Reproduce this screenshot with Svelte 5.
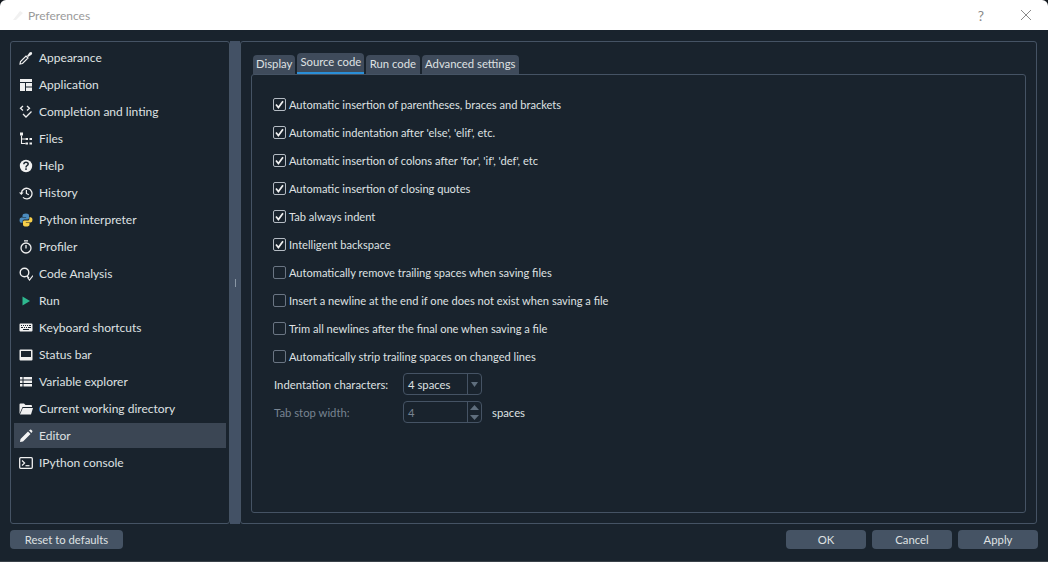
<script>
  const pages = [
    'Appearance', 'Application', 'Completion and linting', 'Files', 'Help', 'History',
    'Python interpreter', 'Profiler', 'Code Analysis', 'Run', 'Keyboard shortcuts',
    'Status bar', 'Variable explorer', 'Current working directory', 'Editor', 'IPython console'
  ];
  const tabs = ['Display', 'Source code', 'Run code', 'Advanced settings'];
  const options = [
    { label: 'Automatic insertion of parentheses, braces and brackets', on: true },
    { label: "Automatic indentation after 'else', 'elif', etc.", on: true },
    { label: "Automatic insertion of colons after 'for', 'if', 'def', etc", on: true },
    { label: 'Automatic insertion of closing quotes', on: true },
    { label: 'Tab always indent', on: true },
    { label: 'Intelligent backspace', on: true },
    { label: 'Automatically remove trailing spaces when saving files', on: false },
    { label: 'Insert a newline at the end if one does not exist when saving a file', on: false },
    { label: 'Trim all newlines after the final one when saving a file', on: false },
    { label: 'Automatically strip trailing spaces on changed lines', on: false }
  ];
</script>

<div class="window">
  <header class="titlebar">
    <svg class="logo" width="14" height="14" viewBox="0 0 14 14"><path d="M2 12 L9 3 L12 5 L5 12 Z" fill="#f1f1f1"/></svg>
    <span class="title">Preferences</span>
    <span class="help">?</span>
    <svg class="close" width="12" height="12" viewBox="0 0 12 12"><path d="M1 1 L11 11 M11 1 L1 11" stroke="#8a8a8a" stroke-width="1" fill="none"/></svg>
  </header>

  <div class="body">
    <div class="panes">
      <ul class="sidebar">
        {#each pages as page}
          <li class="page" class:active={page === 'Editor'}>
            <svg class="icon" width="14" height="14" viewBox="0 0 14 14">
              {#if page === 'Appearance'}
                <path d="M1 13 L1.5 10.5 L7 5 L9 7 L3.5 12.5 Z" fill="none" stroke="#f0f0f0" stroke-width="1.2"/>
                <path d="M6.5 3.5 L8 5 L10.5 1.5 Q12 0.5 13 1.5 Q13.5 3 12.5 3.8 L9 6 L10.5 7.5 Z" fill="#f0f0f0"/>
              {:else if page === 'Application'}
                <path d="M1 1 H13 V4 H1 Z M1 5 H6 V13 H1 Z M7 5 H13 V8.5 H7 Z M7 9.5 H13 V13 H7 Z" fill="#f0f0f0"/>
              {:else if page === 'Completion and linting'}
                <path d="M4 1 L1.5 3.3 L4 5.6 M8 1 L10.5 3.3 L8 5.6 M4 9 L7 12 L12.5 6.5" fill="none" stroke="#f0f0f0" stroke-width="1.3"/>
              {:else if page === 'Files'}
                <path d="M1 0.5 H4 V3.5 H1 Z M6.5 6 H9 V8 H6.5 Z M10.5 6 H13 V8 H10.5 Z M6.5 10.5 H9 V12.5 H6.5 Z M10.5 10.5 H13 V12.5 H10.5 Z" fill="#f0f0f0"/>
                <path d="M2.5 3.5 V11.5 H6.5 M2.5 7 H6.5" fill="none" stroke="#f0f0f0" stroke-width="1.1"/>
              {:else if page === 'Help'}
                <circle cx="7" cy="7" r="6.2" fill="#f0f0f0"/>
                <path d="M4.8 5.3 Q5 3.2 7 3.2 Q9.2 3.2 9.2 5 Q9.2 6 8 6.7 Q7 7.2 7 8.4" fill="none" stroke="#19232d" stroke-width="1.5"/>
                <rect x="6.2" y="9.3" width="1.6" height="1.6" fill="#19232d"/>
              {:else if page === 'History'}
                <path d="M2.4 7 A5.3 5.3 0 1 1 4 11.4" fill="none" stroke="#f0f0f0" stroke-width="1.3"/>
                <path d="M0 6.4 H4.6 L2.3 9 Z" fill="#f0f0f0"/>
                <path d="M7.4 4 V7.4 L9.8 8.8" fill="none" stroke="#f0f0f0" stroke-width="1.2"/>
              {:else if page === 'Python interpreter'}
                <path d="M7 0.5 Q3.5 0.5 3.5 2.5 V4 H7.2 V4.6 H2.3 Q0.5 4.6 0.5 7.2 Q0.5 9.8 2.3 9.8 H3.6 V8 Q3.6 6.4 5.2 6.4 H8.6 Q10 6.4 10 5 V2.5 Q10 0.5 7 0.5 Z" fill="#4b8bbe"/>
                <path d="M7 13.5 Q10.5 13.5 10.5 11.5 V10 H6.8 V9.4 H11.7 Q13.5 9.4 13.5 6.8 Q13.5 4.2 11.7 4.2 H10.4 V6 Q10.4 7.6 8.8 7.6 H5.4 Q4 7.6 4 9 V11.5 Q4 13.5 7 13.5 Z" fill="#f7d04a"/>
              {:else if page === 'Profiler'}
                <circle cx="7" cy="8" r="5" fill="none" stroke="#f0f0f0" stroke-width="1.3"/>
                <path d="M5 0.8 H9 M7 5 V8.4" fill="none" stroke="#f0f0f0" stroke-width="1.3"/>
              {:else if page === 'Code Analysis'}
                <circle cx="5.5" cy="5.5" r="4.3" fill="none" stroke="#f0f0f0" stroke-width="1.4"/>
                <path d="M8 9 L10 11 M8.5 10.5 L10.5 13 L14 8.5" fill="none" stroke="#f0f0f0" stroke-width="1.2"/>
              {:else if page === 'Run'}
                <path d="M3.5 2.5 L11 7 L3.5 11.5 Z" fill="#2eb88f"/>
              {:else if page === 'Keyboard shortcuts'}
                <path fill-rule="evenodd" d="M1.5 2.5 H12.5 Q13.5 2.5 13.5 3.5 V9.5 Q13.5 10.5 12.5 10.5 H1.5 Q0.5 10.5 0.5 9.5 V3.5 Q0.5 2.5 1.5 2.5 Z M2 4 V5 H3 V4 Z M4 4 V5 H5 V4 Z M6 4 V5 H7 V4 Z M8 4 V5 H9 V4 Z M10 4 V5 H12 V4 Z M2 6 V7 H4 V6 Z M5 6 V7 H6 V6 Z M7 6 V7 H8 V6 Z M9 6 V7 H12 V6 Z M4 8 V9 H10 V8 Z" fill="#f0f0f0"/>
              {:else if page === 'Status bar'}
                <path fill-rule="evenodd" d="M1.5 1.5 H12.5 Q13.5 1.5 13.5 2.5 V11.5 Q13.5 12.5 12.5 12.5 H1.5 Q0.5 12.5 0.5 11.5 V2.5 Q0.5 1.5 1.5 1.5 Z M2 3 V9 H12 V3 Z" fill="#f0f0f0"/>
              {:else if page === 'Variable explorer'}
                <path d="M1 2 H3.5 V4.5 H1 Z M4.5 2 H13 V4.5 H4.5 Z M1 5.5 H3.5 V8 H1 Z M4.5 5.5 H13 V8 H4.5 Z M1 9 H3.5 V11.5 H1 Z M4.5 9 H13 V11.5 H4.5 Z" fill="#f0f0f0"/>
              {:else if page === 'Current working directory'}
                <path d="M0.5 12 V2.5 Q0.5 1.5 1.5 1.5 H5 L6.5 3 H12 Q13 3 13 4 V5 H3.5 Z" fill="#f0f0f0"/>
                <path d="M1 12.5 L3.8 6 H14 L12 12.5 Z" fill="#f0f0f0"/>
              {:else if page === 'Editor'}
                <path d="M1 13 L1.5 10 L9 2.5 L11.5 5 L4 12.5 Z M10 1.5 L11 0.7 Q11.6 0.3 12.2 0.8 L13.2 1.8 Q13.7 2.4 13.2 3 L12.4 4 Z" fill="#f4f4f4"/>
              {:else if page === 'IPython console'}
                <rect x="0.7" y="1.7" width="12.6" height="10.6" rx="1" fill="none" stroke="#f0f0f0" stroke-width="1.3"/>
                <path d="M3 4.5 L5.6 7 L3 9.5" fill="none" stroke="#f0f0f0" stroke-width="1.2"/>
                <path d="M6.5 9.7 H10.5" stroke="#f0f0f0" stroke-width="1.2"/>
              {/if}
            </svg>
            <span>{page}</span>
          </li>
        {/each}
      </ul>

      <div class="splitter"><span class="grip"></span></div>

      <section class="content">
        <div class="tabs">
          {#each tabs as tab}
            <div class="tab" class:selected={tab === 'Source code'}>{tab}</div>
          {/each}
        </div>
        <div class="tabpane">
          <div class="options">
            {#each options as opt}
              <div class="option">
                <span class="check" class:on={opt.on}>
                  {#if opt.on}
                    <svg width="13" height="13" viewBox="0 0 13 13"><path d="M3 6.5 L5.4 9.5 L10 3.2" fill="none" stroke="#f0f0f0" stroke-width="1.7"/></svg>
                  {/if}
                </span>
                <span>{opt.label}</span>
              </div>
            {/each}
          </div>
          <div class="field first">
            <span class="field-label">Indentation characters:</span>
            <div class="combo">
              <span class="value">4 spaces</span>
              <span class="arrows single"><svg width="7" height="5" viewBox="0 0 7 5"><path d="M0 0 H7 L3.5 5 Z" fill="#5f6e7d"/></svg></span>
            </div>
          </div>
          <div class="field disabled">
            <span class="field-label">Tab stop width:</span>
            <div class="combo">
              <span class="value">4</span>
              <span class="arrows">
                <span class="spin"><svg width="9" height="5" viewBox="0 0 9 5"><path d="M4.5 0 L9 5 H0 Z" fill="#5f6e7d"/></svg></span>
                <span class="spin"><svg width="9" height="5" viewBox="0 0 9 5"><path d="M0 0 H9 L4.5 5 Z" fill="#5f6e7d"/></svg></span>
              </span>
            </div>
            <span class="suffix">spaces</span>
          </div>
        </div>
      </section>
    </div>

    <footer class="footer">
      <button class="reset">Reset to defaults</button>
      <div class="actions">
        <button>OK</button>
        <button>Cancel</button>
        <button>Apply</button>
      </div>
    </footer>
  </div>
</div>

<style>
  :global(body) {
    margin: 0;
    background: #12171d;
  }

  .window {
    width: 1048px;
    height: 562px;
    display: flex;
    flex-direction: column;
    overflow: hidden;
    font-family: "Lato", "Open Sans", sans-serif;
    font-size: 12px;
    color: #dfe1e2;
    white-space: nowrap;
  }

  .titlebar {
    height: 30px;
    flex: none;
    background: #fff;
    display: flex;
    align-items: center;
    padding: 0 16px 0 11px;
    border-radius: 6px 6px 0 0;
  }
  .title {
    margin-left: 3px;
    color: #9a9a9a;
  }
  .help {
    margin-left: auto;
    margin-right: 36px;
    color: #8a8a8a;
    font-size: 14px;
  }

  .body {
    flex: 1;
    background: #19232d;
    padding: 11px 10px 0 10px;
    display: flex;
    flex-direction: column;
    border-bottom: 1px solid #3a4149;
  }

  .panes {
    height: 483px;
    display: flex;
    flex: none;
    margin-right: 1px;
  }

  .sidebar {
    width: 220px;
    box-sizing: border-box;
    margin: 0;
    padding: 3px 3px;
    list-style: none;
    border: 1px solid #455364;
    border-radius: 3px;
    display: flex;
    flex-direction: column;
    gap: 2px;
  }
  .page {
    height: 25px;
    display: flex;
    align-items: center;
    padding-left: 5px;
    gap: 6px;
    flex: none;
  }
  .page.active {
    background: #3b4654;
  }

  .splitter {
    width: 10px;
    background: #435165;
    display: flex;
    align-items: center;
    justify-content: center;
  }
  .grip {
    width: 1px;
    height: 8px;
    background: #8a97a5;
  }

  .content {
    flex: 1;
    box-sizing: border-box;
    border: 1px solid #455364;
    border-radius: 3px;
    padding: 11px 10px 10px 10px;
    display: flex;
    flex-direction: column;
    font-size: 11.3px;
  }

  .tabs {
    display: flex;
    align-items: flex-end;
    gap: 2px;
    height: 21px;
    padding-left: 2px;
    flex: none;
  }
  .tab {
    height: 19px;
    line-height: 18px;
    padding: 0 3px;
    background: #3f4b5b;
    border-radius: 4px 4px 0 0;
  }
  .tab:nth-child(n+3) {
    padding: 0 3.5px;
  }
  .tab.selected {
    height: 21px;
    line-height: 18px;
    box-sizing: border-box;
    border-bottom: 2px solid #2a8fd8;
  }

  .tabpane {
    flex: 1;
    border: 1px solid #455364;
    border-radius: 3px;
    padding: 15px 21px;
  }

  .option {
    height: 28px;
    display: flex;
    align-items: center;
    gap: 3px;
    font-size: 11.1px;
  }
  .check {
    width: 11px;
    height: 11px;
    border: 1px solid #6a7583;
    border-radius: 2px;
    display: block;
    position: relative;
    flex: none;
  }
  .check.on {
    border-color: #b4bbc3;
  }
  .check svg {
    position: absolute;
    left: -1px;
    top: -1px;
  }

  .field {
    display: flex;
    align-items: center;
    height: 22px;
    margin-bottom: 6px;
  }
  .field.first {
    margin-top: 3px;
  }
  .field-label {
    width: 129px;
    margin-left: 1px;
  }
  .combo {
    width: 79px;
    height: 22px;
    box-sizing: border-box;
    border: 1px solid #455364;
    border-radius: 4px;
    display: flex;
    align-items: center;
    justify-content: space-between;
  }
  .value {
    padding-left: 4px;
  }
  .arrows {
    width: 13px;
    height: 100%;
    border-left: 1px solid #455364;
    display: flex;
    flex-direction: column;
    align-items: center;
    justify-content: center;
  }
  .spin {
    flex: 1;
    display: flex;
    align-items: center;
    justify-content: center;
  }
  .field.disabled .field-label,
  .field.disabled .value {
    color: #788491;
  }
  .suffix {
    margin-left: 10px;
  }

  .footer {
    display: flex;
    justify-content: space-between;
    margin-top: 6px;
  }
  .actions {
    display: flex;
    gap: 6px;
  }
  button {
    height: 19px;
    width: 80px;
    padding: 0;
    border: none;
    border-radius: 4px;
    background: #455364;
    color: #dfe1e2;
    font: inherit;
    font-size: 11.3px;
  }
  .reset {
    width: 113px;
  }
</style>
